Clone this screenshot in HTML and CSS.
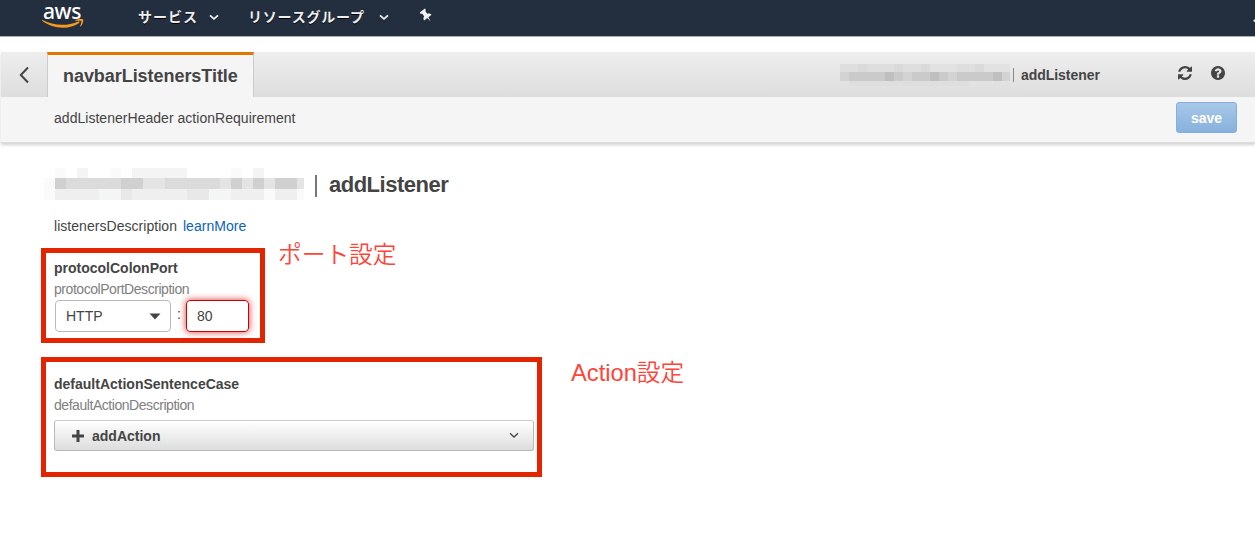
FILE: index.html
```html
<!DOCTYPE html>
<html lang="ja">
<head>
<meta charset="utf-8">
<title>addListener</title>
<link rel="stylesheet" href="styles.css">
</head>
<body>
<header class="nav">
  <div class="logo">
    <span class="logo-text">aws</span>
    <svg class="smile" width="42" height="10" viewBox="0 0 42 10"><path d="M.4 1C11 6.600 25 7.500 36.200 2.400c1-.4 1.700.7.900 1.500C28 10.600 11.500 10.600.1 1.700c-.3-.3 0-.9.300-.7z" fill="#f7981f"/><path d="M33.500 1.100C35.200-.1 40-.3 41 .4c.8 1-.2 5.300-2.500 7.100-.4.300-.7.100-.5-.3.600-1.400 1.700-4.400 1.200-5.100-.6-.7-3.800-.4-5.300-.2-.6 0-.8-.5-.4-.8z" fill="#f7981f"/></svg>
  </div>
  <div class="menu services"><span class="menu-a">サービス</span><svg width="10" height="7" viewBox="0 0 10 7"><path d="M1 1.300l4 3.600 4-3.600" fill="none" stroke="#eee" stroke-width="1.800"/></svg></div>
  <div class="menu groups"><span class="menu-b">リソースグループ</span><svg width="10" height="7" viewBox="0 0 10 7"><path d="M1 1.300l4 3.600 4-3.600" fill="none" stroke="#eee" stroke-width="1.800"/></svg></div>
  <svg class="pin" width="14" height="16" viewBox="0 0 14 16"><path transform="translate(6 7.300) rotate(-38)" d="M-3.300-6h6.600v1.700L2-3.800V-.5c1.600.7 2.700 1.800 2.700 3.500H.7L0 7.800-.7 3h-4c0-1.700 1.100-2.800 2.700-3.500v-3.300l-1.300-.5z" fill="#f2f2f2"/></svg>
  <svg class="bell" width="2" height="5" viewBox="0 0 2 5"><path d="M0 3L2 1v3z" fill="#eee"/></svg>
</header>

<section class="toolbar">
  <div class="titlebar">
    <div class="back"><svg width="12" height="18" viewBox="0 0 12 18"><path d="M10 1.500L2.800 9l7.200 7.500" fill="none" stroke="#444" stroke-width="2"/></svg></div>
    <div class="tab"><span>navbarListenersTitle</span></div>
    <div class="crumb">
      <svg class="mosaic-s" width="171" height="23" viewBox="0 0 171 23" shape-rendering="crispEdges">
        <path fill="#dedede" d="M0 0h90v8H0zM117 0h27v8h-27zM9 17h120v5H9z"/>
        <path fill="#e2e2e2" d="M90 0h27v8H90zM144 0h26v8h-26z"/><path fill="#dadada" d="M18 0h9v8h-9zM54 0h9v8h-9zM81 0h9v8h-9zM135 0h9v8h-9z"/>
        <path fill="#cacaca" d="M0 8h170v9H0z"/><path fill="#d3d3d3" d="M0 8h9v9H0zM63 8h9v9h-9zM108 8h9v9h-9zM162 8h8v9h-8z"/>
        <path fill="#bfbfbf" d="M45 8h9v9h-9zM90 8h9v9h-9zM153 8h9v9h-9z"/>
      </svg>
      <i class="bar"></i>
      <span class="crumb-name">addListener</span>
    </div>
    <svg class="refresh" width="14" height="14" viewBox="0 0 1536 1536"><path fill="#444" d="M1511 928q0 5-1 7-64 268-268 434.500T764 1536q-146 0-282.500-55T238 1324l-129 129q-19 19-45 19t-45-19-19-45V960q0-26 19-45t45-19h448q26 0 45 19t19 45-19 45l-137 137q71 66 161 102t187 36q134 0 250-65t186-179q11-17 53-117 8-23 30-23h192q13 0 22.500 9.500t9.500 22.500zM1536 128v448q0 26-19 45t-45 19h-448q-26 0-45-19t-19-45 19-45l138-138Q969 256 768 256q-134 0-250 65T332 500q-11 17-53 117-8 23-30 23H50q-13 0-22.500-9.500T18 608v-7q65-268 270-434.500T768 0q146 0 284 55.500T1297 212l130-129q19-19 45-19t45 19 19 45z"/></svg>
    <svg class="help" width="14" height="14" viewBox="0 0 1536 1536"><path fill="#444" d="M896 1248v-192q0-14-9-23t-23-9H672q-14 0-23 9t-9 23v192q0 14 9 23t23 9h192q14 0 23-9t9-23zM1152 576q0-88-55.500-163T958 297t-170-41q-243 0-371 213-15 24 8 42l132 100q7 6 19 6 16 0 25-12 53-68 86-92 34-24 86-24 48 0 85.500 26t37.500 59q0 38-20 61t-68 45q-63 28-115.500 86.500T640 892v36q0 14 9 23t23 9h192q14 0 23-9t9-23q0-19 21.500-49.500T972 829q32-18 49-28.500t46-35 44.500-48 28-60.500 12.500-81zM1536 768q0 209-103 385.500T1153.500 1433 768 1536t-385.500-103T103 1153.500 0 768t103-385.500T382.500 103 768 0t385.500 103T1433 382.500 1536 768z"/></svg>
  </div>
  <div class="subbar">
    <span class="sub-text">addListenerHeader actionRequirement</span>
    <button class="save">save</button>
  </div>
</section>

<main class="content">
  <div class="heading">
    <svg width="260" height="32" viewBox="0 0 260 32" shape-rendering="crispEdges">
      <path fill="#fafafa" d="M11 0h11v10H11zM66 0h11v10H66zM187 0h11v10h-11zM0 10h11v22H0zM220 21h11v11h-11zM253 21h7v11h-7z"/>
      <path fill="#f4f4f4" d="M33 0h11v10H33zM88 0h55v10H88zM209 0h11v10h-11z"/>
      <path fill="#dbdbdb" d="M11 10h249v11H11z"/>
      <path fill="#d0d0d0" d="M11 10h11v11H11zM77 10h22v11H77zM187 10h11v11h-11zM209 10h11v11h-11zM231 10h22v11h-22z"/>
      <path fill="#e4e4e4" d="M99 10h22v11H99zM176 10h11v11h-11zM198 10h11v11h-11zM220 10h11v11h-11zM253 10h7v11h-7z"/>
      <path fill="#efefef" d="M11 21h154v11H11zM187 21h33v11h-33zM231 21h22v11h-22z"/>
      <path fill="#e8e8e8" d="M77 21h11v11H77zM143 21h22v11h-22z"/><path fill="#f4f5f5" d="M55 21h22v11H55zM165 21h22v11h-22z"/>
    </svg>
    <i class="bar"></i>
    <h1>addListener</h1>
  </div>
  <p class="desc"><span class="desc-text">listenersDescription</span><a class="more">learnMore</a></p>
  <div class="row port-row">
    <section class="box port">
      <h2 class="t-port">protocolColonPort</h2>
      <p class="hint h-port">protocolPortDescription</p>
      <div class="fields">
        <div class="select"><span>HTTP</span><svg width="12" height="7" viewBox="0 0 12 7"><path d="M.5.500h11L6 6.500z" fill="#444"/></svg></div>
        <span class="colon">:</span>
        <div class="input">80</div>
      </div>
    </section>
    <div class="note note-port">ポート設定</div>
  </div>
  <div class="row action-row">
    <section class="box action">
      <h2 class="t-action">defaultActionSentenceCase</h2>
      <p class="hint h-action">defaultActionDescription</p>
      <div class="add">
        <svg width="12" height="12" viewBox="0 0 12 12"><path d="M4.500 0h3v4.500H12v3H7.500V12h-3V7.500H0v-3h4.500z" fill="#444"/></svg>
        <span>addAction</span>
        <svg class="chev" width="10" height="7" viewBox="0 0 10 7"><path d="M1 1.300l4 3.700 4-3.700" fill="none" stroke="#444" stroke-width="1.300"/></svg>
      </div>
    </section>
    <div class="note note-action">Action設定</div>
  </div>
</main>
</body>
</html>
```

FILE: styles.css
```css
* { box-sizing: border-box; }
body { margin: 0; background: #fff; color: #444; font: 14px/20px "Liberation Sans", "Noto Sans CJK JP", sans-serif; overflow: hidden; }
h1, h2, p { margin: 0; }
span, a, h1, h2, p { white-space: nowrap; }
svg { display: block; flex: none; }

.nav { display: flex; height: 37px; background: #232f3e; border-bottom: 1px solid #aab0b5; }
.logo { width: 96px; padding-left: 42px; flex: none; }
.logo-text { display: block; height: 19px; padding-left: 1px; color: #fff; font: 500 21px/23px "Noto Sans", sans-serif; letter-spacing: -.4px; }
.menu { display: flex; align-items: center; height: 31px; color: #eee; font: bold 14px/20px "Noto Sans CJK JP", sans-serif; text-shadow: 0 1px 0 #000; flex: none; }
.menu svg { margin-top: 3px; }
.services { width: 152px; padding-left: 42px; }
.services svg { margin-left: 11px; }
.menu-a { width: 60px; letter-spacing: 1px; }
.menu-b { width: 118px; letter-spacing: .8px; }
.groups { width: 172px; }
.groups svg { margin-left: 13px; }
.pin { margin-top: 8px; }
.bell { margin: 18px 0 0 auto; }

.toolbar { margin: 15px 0 0 1px; background: #f5f5f5; box-shadow: 0 2px 3px rgba(0,0,0,.18); }
.titlebar { display: flex; height: 45px; background: linear-gradient(#eee, #ddd); }
.back { width: 46px; padding: 14px 0 0 17px; flex: none; }
.tab { width: 207px; height: 45px; padding: 11px 0 0 15px; flex: none; border-top: 3px solid #e07700; border-left: 1px solid #ccc; border-right: 1px solid #ccc; background: #f5f5f5; font-size: 18px; font-weight: bold; letter-spacing: -.05px; }
.crumb { display: flex; margin-left: 586px; padding-top: 12px; flex: none; }
.crumb .bar { width: 1px; height: 14px; margin: 4px 0 0 2px; background: #888; }
.crumb-name { width: 80px; margin: 1px 0 0 7px; font-weight: bold; font-size: 14px; letter-spacing: -.05px; }
.refresh { margin: 14px 0 0 77px; }
.help { margin: 14px 0 0 19px; }
.subbar { display: flex; justify-content: space-between; height: 46px; padding: 5px 18px 0 53px; border-bottom: 1px solid #ddd; }
.sub-text { padding-top: 6px; letter-spacing: .03px; }
.save { width: 61px; height: 31px; padding: 0; border: 1px solid #82afdf; border-radius: 3px; background: linear-gradient(#a9c8e8, #86b1dd); color: #fff; font: bold 14px/31px "Liberation Sans", sans-serif; }

.content { padding: 25px 0 0 41px; }
.heading { display: flex; padding-left: 3px; height: 32px; }
.heading .bar { width: 2px; height: 22px; margin: 7px 0 0 11px; background: #777; }
h1 { margin-left: 12px; font-size: 22px; line-height: 34px; letter-spacing: -.5px; }
.desc { display: flex; gap: 6px; padding: 16px 0 0 13px; height: 48px; letter-spacing: .04px; }
.more { color: #0a63be; }
.row { display: flex; }
.box { flex: none; border: 5px solid #e32400; background: #fff; padding-left: 8px; }
.port { width: 224px; height: 95px; padding-top: 5px; }
.action { width: 501px; height: 120px; padding-top: 12px; }
.action-row { margin-top: 14px; }
h2 { height: 21px; font-size: 14px; line-height: 20px; }
.hint { height: 21px; color: #808080; }
.h-port { letter-spacing: -.45px; }
.h-action { height: 25px; letter-spacing: -.45px; }
.fields { display: flex; padding-left: 1px; }
.select { display: flex; align-items: center; justify-content: space-between; width: 116px; height: 32px; padding: 0 9px 0 10px; border: 1px solid #bbb; border-radius: 4px; }
.colon { width: 15px; padding: 4px 0 0 6px; }
.input { width: 63px; height: 32px; padding-left: 10px; border: 1px solid #c00; border-radius: 4px; line-height: 31px; box-shadow: 0 0 7px rgba(204,0,0,.8); }
.add { display: flex; align-items: center; width: 480px; height: 31px; padding: 0 14px 0 17px; border: 1px solid #b8b8b8; border-top-color: #ccc; border-radius: 3px; background: linear-gradient(#fff, #ddd); font-weight: bold; }
.add span { margin-left: 8px; }
.chev { margin-left: auto; }
.note { color: #ff443a; font: 350 23.700px/32px "Liberation Sans", "Noto Sans CJK JP DemiLight", "Noto Sans CJK JP", sans-serif; white-space: nowrap; }
.note-port { margin: -9px 0 0 13px; }
.note-action { margin: 0 0 0 29px; }
```
